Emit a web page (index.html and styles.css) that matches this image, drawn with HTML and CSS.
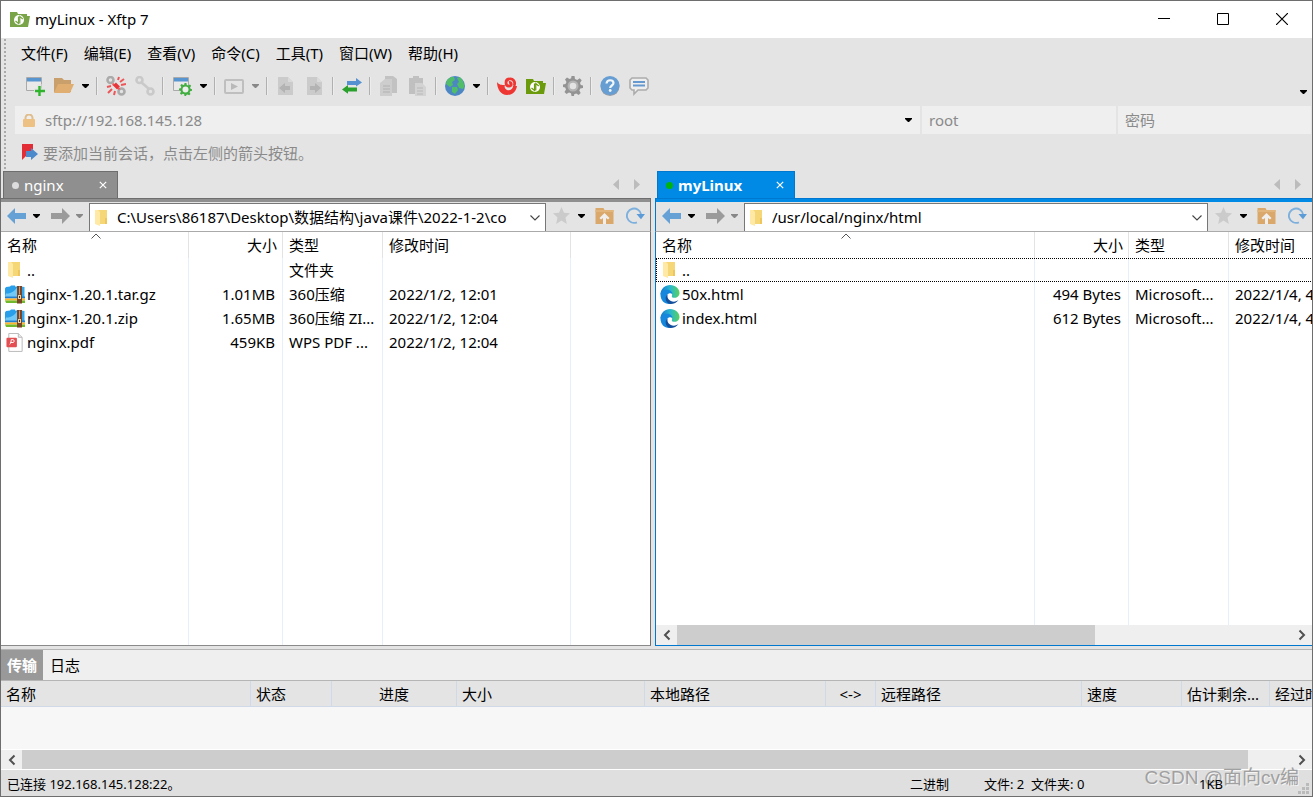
FILE: index.html
```
<!DOCTYPE html>
<html lang="zh-CN">
<head>
<meta charset="utf-8">
<title>myLinux - Xftp 7</title>
<link rel="stylesheet" href="styles.css">
</head>
<body>
<svg class="defs" aria-hidden="true">
  <symbol id="caret" viewBox="0 0 7 4"><path d="M0 0h7v1L4 4H3L0 1z" fill="currentColor"/></symbol>
  <symbol id="chev-down" viewBox="0 0 10 6"><path d="M.5.5 5 5 9.500.5" fill="none" stroke="#444" stroke-width="1.100"/></symbol>
  <symbol id="left" viewBox="0 0 20 16"><path d="M0 8 8 0v5h11v6H8v5z" fill="currentColor"/></symbol>
  <symbol id="right" viewBox="0 0 20 16"><path d="M20 8 12 0v5H1v6h11v5z" fill="currentColor"/></symbol>
  <symbol id="x" viewBox="0 0 8 8"><path d="m.8.8 6.400 6.400M7.200.8.8 7.200" stroke="#fff" stroke-width="1.200"/></symbol>
  <symbol id="scroll-left" viewBox="0 0 8 12"><path d="M6.500 1.500 2 6l4.500 4.500" fill="none" stroke="#505050" stroke-width="2"/></symbol>
  <symbol id="scroll-right" viewBox="0 0 8 12"><path d="M1.500 1.500 6 6l-4.500 4.500" fill="none" stroke="#505050" stroke-width="2"/></symbol>
  <symbol id="folder" viewBox="0 0 14 18"><path d="M3 1h10v14H3z" fill="#f6d778"/><path d="M1 1h3l2 2v14l-5-2z" fill="#ffe9a5"/><path d="M11 9h2v6h-2z" fill="#eec65c"/></symbol>
  <symbol id="star" viewBox="0 0 18 17"><path d="m9 0 2.500 5.700 6 .6-4.500 4.100L14.300 17 9 13.600 3.700 17 5 10.400.5 6.300l6-.6z" fill="#cbcbcb"/></symbol>
  <symbol id="up" viewBox="0 0 18 17"><path d="M0 1h8l1 2h9v14H0z" fill="#d9a86a"/><path d="M0 3h18v2H0z" fill="#e1b57b"/><path d="m4 11 5-5 5 5-1.500 1.500L10.500 11v6h-3v-6l-2 1.500z" fill="#f1eeee"/></symbol>
  <symbol id="refresh" viewBox="0 0 20 18"><path d="M11.500 16.200A7.600 7.600 0 1 1 16 8" fill="none" stroke="#7db0dd" stroke-width="2"/><path d="M11 7.500h9L15.800 13z" fill="#5a9bd8"/></symbol>
  <symbol id="archive" viewBox="0 0 20 18"><path d="M1 1.500 5 1l1-1h4v1h3v10H0V3z" fill="#289fe8"/><path d="m16 1 3.500.5V12H16z" fill="#36a9ee"/><path d="M1 8c5 0 8-2 11-6v9H0z" fill="#70c9f7"/><path d="M0 11h20v2H0z" fill="#1f7fd2"/><path d="M0 13h20v2H0z" fill="#ffb52d"/><path d="M0 15h20v2.500H1z" fill="#70b92c"/><path d="M12 .5h5V18h-5z" fill="#7a4529"/><path d="M14 1h1v8h-1z" fill="#c49b72"/><path d="M13 9.500h3v4h-3z" fill="#ead3a4"/><path d="M14 10.500h1v2h-1z" fill="#5a2f18"/></symbol>
  <symbol id="pdf" viewBox="0 0 18 20"><path d="M2.500.5h10l4 4v14.900h-14z" fill="#fff" stroke="#b7b7b7"/><path d="M12.500.5v4h4" fill="#e9e9e9" stroke="#b7b7b7"/><rect y="5" width="11" height="10" rx="1" fill="#e34f52"/><path d="M3.500 12c1-1 1.500-3 1.500-5h2c1.500 0 1.500 3 0 3H4" fill="none" stroke="#fff"/></symbol>
  <symbol id="edge" viewBox="0 0 20 20"><linearGradient id="eg" x1="0" x2="1"><stop stop-color="#1678cf"/><stop offset=".5" stop-color="#27b7d0"/><stop offset="1" stop-color="#5bd15b"/></linearGradient><path d="M0 10C0 4 5 0 10 0c6 0 10 4 10 8.500 0 3-2.400 5-5 5-2 0-3.600-.8-3-2C13 9 11 7 8 7c-4 0-7 2-8 3z" fill="url(#eg)"/><path d="M0 10c0-3 3-5 7-5 3 0 5.500 2 5.500 4.500C11 8 8 8.500 7 10.500c-2 4 2 8.500 7 7.500-1.300 1.200-3 2-5 2-5 0-9-4-9-10z" fill="#1587dc"/><path d="M7.500 10c-1 4 2 7.500 6.500 7.500 2 0 4-1 5-2-1.500 3-5 4.500-8.500 4.500C5 19.500 4 12 7.500 10z" fill="#124f9c"/></symbol>
  <symbol id="gear" viewBox="0 0 20 20"><path d="M8.500 0h3l.5 3 2.200 1 2.500-1.700 2 2L17 7l.8 2 2.200.5v2.500l-2.700.5-1 2 1.400 2.500-2 2-2.500-1.500-2 .8L11 20H8.500L8 17.300l-2-.9L3.500 18l-2-2L3 13.500l-.8-2L0 11V8.500L2.500 8l1-2L2 3.500l2-2L6.500 3l1.700-.7z" fill="currentColor"/></symbol>
  <symbol id="xdir" viewBox="0 0 20 16"><path d="M0 1h7l1 2h9v2h3l-2 11H0z" fill="currentColor"/><circle cx="9" cy="9" r="5" fill="#fff"/><path d="M8.500 5.500v7L5.500 10M9.800 12.500v-7l3 2.500" fill="none" stroke="currentColor" stroke-width="1.200"/></symbol>
</svg>

<main class="window">
  <header class="titlebar">
    <svg class="app-icon" viewBox="0 0 20 16"><use href="#xdir"/></svg>
    <h1>myLinux - Xftp 7</h1>
    <button class="win-btn" aria-label="最小化"><svg width="12" height="12"><path d="M0 5.500h12" stroke="#000"/></svg></button>
    <button class="win-btn" aria-label="最大化"><svg width="12" height="12"><path d="M.5.5h11v11H.5z" fill="none" stroke="#000"/></svg></button>
    <button class="win-btn" aria-label="关闭"><svg width="12" height="12"><path d="m0 0 12 12M12 0 0 12" stroke="#000" stroke-width="1.200"/></svg></button>
  </header>

  <section class="bars">
    <nav class="menu">
      <button>文件(F)</button><button>编辑(E)</button><button>查看(V)</button><button>命令(C)</button><button>工具(T)</button><button>窗口(W)</button><button>帮助(H)</button>
    </nav>

    <div class="toolbar" role="toolbar">
      <button class="tool" aria-label="新建"><svg viewBox="0 0 20 20"><path d="M1.500 1.500h15v13h-15z" fill="#e9e9e9" stroke="#aaa"/><path d="M2 2h14v3.500H2z" fill="#5795d0"/><path d="M14.500 8v12M9 14.500h11" stroke="#e4e4e4" stroke-width="4"/><path d="M14.500 10v10M10 15h10" stroke="#2eb52c" stroke-width="2.400"/></svg></button>
      <button class="tool" aria-label="打开"><svg viewBox="0 0 20 20"><path d="M0 2h8l2 2h7v12H0z" fill="#c9a06c"/><path d="M4 8h16l-4 9H0z" fill="#e0ae70"/></svg></button>
      <button class="drop" aria-label="打开选项"><svg><use href="#caret"/></svg></button>
      <i class="sep"></i>
      <button class="tool" aria-label="断开"><svg viewBox="0 0 20 20"><g fill="none" stroke="#ababab" stroke-width="2.600"><circle cx="4.500" cy="4" r="3"/><circle cx="15.500" cy="15.500" r="3"/></g><path d="m6.500 8 2 1m4 3 1 1.500M12 4l1-3m1 5 4-3m-3 6 5-1M1 11l4-1m-3 7 4-4m2 6 1-4" stroke="#ee5558" stroke-width="2"/><path d="m8.500 8 4 4" stroke="#e93539" stroke-width="4"/></svg></button>
      <button class="tool" aria-label="重新连接"><svg viewBox="0 0 20 20"><g fill="none" stroke="#c9c9c9" stroke-width="2.600"><circle cx="4.500" cy="4" r="3"/><circle cx="15.500" cy="15.500" r="3"/><path d="m6 6 8 7"/></g></svg></button>
      <i class="sep"></i>
      <button class="tool" aria-label="属性"><svg viewBox="0 0 20 20"><path d="M1.500 1.500h15v13h-15z" fill="#e9e9e9" stroke="#aaa"/><path d="M2 2h14v3.500H2z" fill="#5795d0"/><g transform="translate(7 7) scale(.65)" color="#43ae41"><use href="#gear" width="20" height="20"/></g><circle cx="13.500" cy="13.500" r="3" fill="#eee"/></svg></button>
      <button class="drop" aria-label="属性选项"><svg><use href="#caret"/></svg></button>
      <i class="sep"></i>
      <button class="tool" aria-label="执行"><svg viewBox="0 0 20 20"><rect x="1" y="4" width="18" height="13" rx="1" fill="none" stroke="#bfbfbf" stroke-width="2"/><path d="m7 7 7 3.500L7 14z" fill="#b9b9b9"/></svg></button>
      <button class="drop dim" aria-label="执行选项"><svg><use href="#caret"/></svg></button>
      <i class="sep"></i>
      <button class="tool" aria-label="传输到左侧"><svg viewBox="0 0 20 20"><path d="M2 1h10l5 5v13H2z" fill="#cbcbcb"/><path d="M12 1v5h5" fill="#dadada"/><path d="m3 12 6-5v3h5v4H9v3z" fill="#b3b3b3"/></svg></button>
      <button class="tool" aria-label="传输到右侧"><svg viewBox="0 0 20 20"><path d="M2 1h10l5 5v13H2z" fill="#cbcbcb"/><path d="M12 1v5h5" fill="#dadada"/><path d="m16 12-6-5v3H5v4h5v3z" fill="#b3b3b3"/></svg></button>
      <i class="sep"></i>
      <button class="tool" aria-label="同步"><svg viewBox="0 0 20 20"><path d="M5 5h9V2l6 4.500-6 4V9H5z" fill="#5590d1"/><path d="M15 11.500H6V9l-6 4.500 6 4.200V15.500h9z" fill="#29a12c"/></svg></button>
      <i class="sep"></i>
      <button class="tool" aria-label="复制"><svg viewBox="0 0 20 20"><path d="M6 0h8l4 3v14H6z" fill="#c2c2c2"/><path d="M6 3 1 7v13h12V3z" fill="#cdcdcd"/><path d="M4 10h7M4 13h7M4 16h7" stroke="#b1b1b1"/></svg></button>
      <button class="tool" aria-label="粘贴"><svg viewBox="0 0 20 20"><path d="M1 2h4V0h6v2h4v16H1z" fill="#c0c0c0"/><path d="M7 7h7l4 4v9H7z" fill="#d3d3d3"/><path d="M9 12h6M9 15h6M9 18h6" stroke="#b8b8b8"/></svg></button>
      <i class="sep"></i>
      <button class="tool" aria-label="浏览器"><svg viewBox="0 0 20 20"><circle cx="10" cy="10" r="10" fill="#4c87c4"/><path d="M2 4l4-3 3 0 1 3-3 2 1 3-3 2-4-3zm10-2 3-1 3 4 1.500 5-1.500 3-4-1-2-4 2-2zM7 11l5 0 1 3-3 4-3-2z" fill="#50bd68"/></svg></button>
      <button class="drop" aria-label="浏览器选项"><svg><use href="#caret"/></svg></button>
      <i class="sep"></i>
      <button class="tool" aria-label="Xshell"><svg viewBox="0 0 20 20"><path d="M0 6c2 3 5 3 8 3-1 2 0 4 2 5 3 1 6-1 6-4h4c-1 6-5 9-10 9C4 19 0 13 0 6z" fill="#ee3632"/><path d="M17 10c2-4-1-8-5-7-4 .5-4 7 0 7 3 0 3-4 0-3.500" fill="none" stroke="#ee3632" stroke-width="2.800"/></svg></button>
      <button class="tool olive" aria-label="Xftp"><svg viewBox="0 -2 20 20"><use href="#xdir" width="20" height="16"/></svg></button>
      <i class="sep"></i>
      <button class="tool gray" aria-label="选项"><svg viewBox="0 0 20 20"><use href="#gear"/><circle cx="10" cy="10" r="5.500" fill="#b5b5b5"/><circle cx="10" cy="10" r="3.300" fill="#e4e4e4"/></svg></button>
      <i class="sep"></i>
      <button class="tool" aria-label="帮助"><svg viewBox="0 0 20 20"><circle cx="10" cy="10.500" r="9.500" fill="#929da9"/><circle cx="10" cy="9.500" r="9.500" fill="#669ed3"/><path d="M6.500 7.500C7 3 13.500 3.500 13.500 7c0 2.500-3.300 2.500-3.300 5" fill="none" stroke="#f2f7fa" stroke-width="2.200"/><circle cx="10.200" cy="14.500" r="1.400" fill="#f2f7fa"/></svg></button>
      <button class="tool" aria-label="反馈"><svg viewBox="0 0 20 20"><path d="M3 2h14l2 2v8l-2 2H9l-4 4v-4H3l-2-2V4z" fill="#eee" stroke="#acacac" stroke-width="1.600"/><path d="M4 6h12M4 9.500h12" stroke="#6699d0" stroke-width="1.800"/></svg></button>
      <button class="overflow" aria-label="更多按钮"><svg><use href="#caret"/></svg></button>
    </div>

    <form class="address">
      <div class="field host">
        <svg class="lock" viewBox="0 0 12 13"><path d="M2.500 6V4a3.500 3.500 0 0 1 7 0v2" fill="none" stroke="#dfbd8c" stroke-width="2"/><rect y="5" width="12" height="8" rx="1" fill="#ecc183"/></svg>
        <input aria-label="主机" value="sftp://192.168.145.128">
        <button type="button" class="drop" aria-label="主机列表"><svg><use href="#caret"/></svg></button>
      </div>
      <div class="field user"><input aria-label="用户名" placeholder="root"></div>
      <div class="field pass"><input type="password" aria-label="密码" placeholder="密码"></div>
    </form>

    <p class="hint"><svg viewBox="0 0 17 17"><path d="M1 0h11v5L1 16z" fill="#e22d36"/><path d="M5 7h5V4l7 6-7 6v-3H5z" fill="#4d8acc"/></svg>要添加当前会话，点击左侧的箭头按钮。</p>
  </section>

  <div class="panes">
    <section class="pane local">
      <div class="tabs">
        <div class="tab"><button class="tab-name"><i class="dot"></i>nginx</button><button class="tab-close" aria-label="关闭 nginx"><svg><use href="#x"/></svg></button></div>
        <div class="tab-nav"><svg viewBox="0 0 29 11"><path d="M7 0v11L1 5.500zM22 0v11l6-5.500z" fill="#bcbcbc"/></svg></div>
      </div>
      <div class="pathbar">
        <button class="nav back" aria-label="后退"><svg><use href="#left"/></svg></button><button class="drop" aria-label="后退历史"><svg><use href="#caret"/></svg></button>
        <button class="nav fwd" aria-label="前进"><svg><use href="#right"/></svg></button><button class="drop dim" aria-label="前进历史"><svg><use href="#caret"/></svg></button>
        <div class="path"><svg class="fold"><use href="#folder"/></svg><input aria-label="本地路径" value="C:\Users\86187\Desktop\数据结构\java课件\2022-1-2\co"><button class="chev" aria-label="路径列表"><svg><use href="#chev-down"/></svg></button></div>
        <button class="act" aria-label="收藏"><svg><use href="#star"/></svg></button><button class="drop tight" aria-label="收藏列表"><svg><use href="#caret"/></svg></button>
        <button class="act" aria-label="上级目录"><svg><use href="#up"/></svg></button><button class="act" aria-label="刷新"><svg><use href="#refresh"/></svg></button>
      </div>
      <div class="list">
        <svg class="sort" viewBox="0 0 10 6"><path d="M.5 5.500 5 1l4.500 4.500" fill="none" stroke="#555"/></svg>
        <table class="files">
          <colgroup><col class="c-name"><col class="c-size"><col class="c-type"><col class="c-date"><col></colgroup>
          <thead><tr><th>名称</th><th class="num">大小</th><th>类型</th><th>修改时间</th><th></th></tr></thead>
          <tbody>
            <tr><td><span class="file"><svg class="fold"><use href="#folder"/></svg>..</span></td><td></td><td>文件夹</td><td></td><td></td></tr>
            <tr><td><span class="file"><svg><use href="#archive"/></svg>nginx-1.20.1.tar.gz</span></td><td class="num">1.01MB</td><td>360压缩</td><td>2022/1/2, 12:01</td><td></td></tr>
            <tr><td><span class="file"><svg><use href="#archive"/></svg>nginx-1.20.1.zip</span></td><td class="num">1.65MB</td><td>360压缩 ZI...</td><td>2022/1/2, 12:04</td><td></td></tr>
            <tr><td><span class="file"><svg><use href="#pdf"/></svg>nginx.pdf</span></td><td class="num">459KB</td><td>WPS PDF ...</td><td>2022/1/2, 12:04</td><td></td></tr>
            <tr class="fill"><td></td><td></td><td></td><td></td><td></td></tr>
          </tbody>
        </table>
      </div>
    </section>

    <section class="pane remote">
      <div class="tabs">
        <div class="tab"><button class="tab-name"><i class="dot"></i>myLinux</button><button class="tab-close" aria-label="关闭 myLinux"><svg><use href="#x"/></svg></button></div>
        <div class="tab-nav"><svg viewBox="0 0 29 11"><path d="M7 0v11L1 5.500zM22 0v11l6-5.500z" fill="#bcbcbc"/></svg></div>
      </div>
      <div class="pathbar">
        <button class="nav back" aria-label="后退"><svg><use href="#left"/></svg></button><button class="drop" aria-label="后退历史"><svg><use href="#caret"/></svg></button>
        <button class="nav fwd" aria-label="前进"><svg><use href="#right"/></svg></button><button class="drop dim" aria-label="前进历史"><svg><use href="#caret"/></svg></button>
        <div class="path"><svg class="fold"><use href="#folder"/></svg><input aria-label="远程路径" value="/usr/local/nginx/html"><button class="chev" aria-label="路径列表"><svg><use href="#chev-down"/></svg></button></div>
        <button class="act" aria-label="收藏"><svg><use href="#star"/></svg></button><button class="drop tight" aria-label="收藏列表"><svg><use href="#caret"/></svg></button>
        <button class="act" aria-label="上级目录"><svg><use href="#up"/></svg></button><button class="act" aria-label="刷新"><svg><use href="#refresh"/></svg></button>
      </div>
      <div class="list">
        <svg class="sort" viewBox="0 0 10 6"><path d="M.5 5.500 5 1l4.500 4.500" fill="none" stroke="#555"/></svg>
        <table class="files">
          <colgroup><col class="c-name"><col class="c-size"><col class="c-type"><col class="c-date"></colgroup>
          <thead><tr><th>名称</th><th class="num">大小</th><th>类型</th><th>修改时间</th></tr></thead>
          <tbody>
            <tr class="focus"><td><span class="file"><svg class="fold"><use href="#folder"/></svg>..</span></td><td></td><td></td><td></td></tr>
            <tr><td><span class="file"><svg><use href="#edge"/></svg>50x.html</span></td><td class="num">494 Bytes</td><td>Microsoft...</td><td>2022/1/4, 4</td></tr>
            <tr><td><span class="file"><svg><use href="#edge"/></svg>index.html</span></td><td class="num">612 Bytes</td><td>Microsoft...</td><td>2022/1/4, 4</td></tr>
            <tr class="fill"><td></td><td></td><td></td><td></td></tr>
          </tbody>
        </table>
      </div>
      <div class="scroll"><button aria-label="向左滚动"><svg><use href="#scroll-left"/></svg></button><div class="track"><div class="thumb"></div></div><button aria-label="向右滚动"><svg><use href="#scroll-right"/></svg></button></div>
    </section>
  </div>

  <section class="transfer">
    <div class="transfer-tabs"><button class="on">传输</button><button>日志</button></div>
    <div class="queue">
      <table>
        <colgroup><col class="q-name"><col class="q-state"><col class="q-prog"><col class="q-size"><col class="q-local"><col class="q-dir"><col class="q-remote"><col class="q-speed"><col class="q-left"><col class="q-time"></colgroup>
        <thead><tr><th>名称</th><th>状态</th><th class="mid">进度</th><th>大小</th><th>本地路径</th><th class="mid">&lt;-&gt;</th><th>远程路径</th><th>速度</th><th>估计剩余...</th><th>经过时间</th></tr></thead>
      </table>
    </div>
    <div class="scroll"><button aria-label="向左滚动"><svg><use href="#scroll-left"/></svg></button><div class="track"><div class="thumb"></div></div><button aria-label="向右滚动"><svg><use href="#scroll-right"/></svg></button></div>
  </section>

  <footer class="status">
    <span class="conn">已连接 192.168.145.128:22。</span>
    <span class="mode">二进制</span>
    <span class="count">文件: 2&nbsp; 文件夹: 0</span>
    <span class="bytes">1KB</span>
    <svg class="grip" viewBox="0 0 11 11"><path d="M8 0h3v3H8zM4 4h3v3H4zm4 0h3v3H8zM0 8h3v3H0zm4 0h3v3H4zm4 0h3v3H8z" fill="#bababa"/></svg>
    <span class="watermark">CSDN @面向cv编</span>
  </footer>
</main>
</body>
</html>
```
FILE: styles.css
```
* { box-sizing: border-box; }
html, body { height: 100%; margin: 0; }
body {
  font: 15px/24px "Noto Sans", "Noto Sans CJK SC", sans-serif;
  color: #000;
  overflow: hidden;
}
button, input {
  font: inherit;
  color: inherit;
  border: 0;
  padding: 0;
  margin: 0;
  background: none;
  min-width: 0;
}
button { white-space: nowrap; display: flex; align-items: center; justify-content: center; flex: none; }
svg { display: block; flex: none; }
.defs { position: absolute; width: 0; height: 0; }

.window {
  height: 100%;
  display: flex;
  flex-direction: column;
  background: #e4e4e4;
  border: 1px solid #6e6e6e;
}

/* Title bar */
.titlebar { display: flex; align-items: center; height: 37px; background: #fff; padding: 0 1px 2px 9px; flex: none; }
.titlebar h1 { font-size: 15px; font-weight: 400; margin: 0; flex: 1; }
.app-icon { width: 20px; height: 16px; margin-right: 5px; color: #79a548; }
.win-btn { width: 59px; height: 35px; }

/* Menu, toolbar, address */
.bars { position: relative; flex: none; padding-left: 14px; }
.bars::before {
  content: "";
  position: absolute;
  left: 3px;
  top: 1px;
  bottom: 2px;
  border-left: 2px dotted #aaa;
}
.menu { display: flex; gap: 16px; height: 30px; align-items: center; padding-left: 6px; }
.toolbar { display: flex; height: 38px; align-items: center; padding: 0 0 2px 5px; }
.tool { width: 29px; height: 26px; }
.tool svg { width: 20px; height: 20px; }
.drop { width: 15px; height: 26px; }
.drop svg, .overflow svg { width: 7px; height: 4px; }
.dim { color: #888; }
.olive { color: #6b9a0c; }
.gray { color: #939393; }
.sep { width: 2px; height: 18px; margin: 0 3px; background: linear-gradient(90deg, #b0b0b0 50%, #ededed 50%); }
.overflow { margin-left: auto; width: 17px; height: 24px; align-self: flex-end; }
.address { display: flex; gap: 2px; padding-right: 1px; }
.field { height: 28px; background: #efefef; color: #8a8a8a; display: flex; align-items: center; padding: 0 7px; }
.field input { flex: 1; width: 0; }
.field input::placeholder { color: #8a8a8a; opacity: 1; }
.field .drop { color: #000; width: 10px; }
.host { flex: 1; padding-left: 8px; }
.lock { width: 12px; height: 13px; margin-right: 10px; }
.user { width: 194px; }
.pass { width: 193px; }
.hint { display: flex; align-items: center; height: 37px; margin: 0; padding-left: 6px; color: #8a8a8a; }
.hint svg { width: 17px; height: 17px; margin-right: 5px; }

/* Panes */
.panes { flex: 1; min-height: 0; display: flex; gap: 4px; }
.pane { display: flex; flex-direction: column; min-width: 0; }
.local { flex: 650; --edge: #6e6e6e; --accent: #8f8f8f; }
.remote { flex: 657; --edge: #0078d0; --accent: #008ae5; }
.tabs { display: flex; height: 27px; padding-left: 2px; flex: none; }
.tab {
  display: flex;
  align-items: center;
  background: var(--accent);
  border: 1px solid var(--edge);
  border-bottom: 0;
  color: #fff;
}
.local .tab { width: 115px; }
.remote .tab { width: 138px; font-weight: 700; }
.tab-name { flex: 1; justify-content: flex-start; padding-left: 8px; }
.dot { width: 7px; height: 7px; border-radius: 50%; background: #ddd; margin-right: 5px; }
.remote .dot { background: #00b40c; }
.tab-close { width: 28px; height: 26px; }
.tab-close svg { width: 8px; height: 8px; }
.tab-nav { margin-left: auto; align-self: center; padding-right: 10px; }
.tab-nav svg { width: 29px; height: 11px; }
.pathbar {
  display: flex;
  align-items: center;
  height: 34px;
  padding: 0 0 0 4px;
  border-top: 1px solid var(--edge);
  box-shadow: inset 0 3px var(--accent);
  border-bottom: 1px solid #aaa;
  flex: none;
}
.local .pathbar, .local .list { border-right: 1px solid var(--edge); }
.remote .pathbar, .remote .list, .remote .scroll { border-left: 1px solid var(--edge); }
.nav { width: 24px; height: 24px; margin-top: 1px; }
.nav svg { width: 20px; height: 16px; }
.back { color: #66a1d6; }
.fwd { color: #9b9b9b; margin-left: 4px; }
.pathbar .drop { margin-top: 1px; }
.path {
  flex: 1;
  min-width: 0;
  align-self: stretch;
  display: flex;
  align-items: center;
  margin-top: 4px;
  margin-left: 2px;
  background: #fff;
  border: 1px solid #777;
  border-bottom: 0;
  padding-left: 4px;
}
.path input { flex: 1; width: 0; padding: 0 0 2px 9px; }
.fold { width: 14px; height: 18px; }
.chev { width: 20px; height: 26px; margin-left: 4px; }
.chev svg { width: 10px; height: 6px; }
.act { width: 31px; height: 24px; margin-top: 1px; }
.act svg { width: 19px; height: 17px; }
.pathbar .tight { width: 8px; margin-right: 4px; }
.act:last-child { width: 30px; }

/* File lists */
.list { position: relative; flex: 1; min-height: 0; overflow: hidden; background: #fff; border-bottom: 1px solid #8a8a8a; }
.remote .list { border-bottom: 0; }
.sort { position: absolute; top: 1px; width: 10px; height: 6px; }
.local .sort { left: 90px; }
.remote .sort { left: 185px; }
table { border-collapse: separate; border-spacing: 0; table-layout: fixed; }
.files { width: 100%; height: 100%; }
.remote .files { width: 761px; }
.c-size { width: 94px; }
.c-type { width: 100px; }
.c-date { width: 188px; }
.local .c-name { width: 188px; }
th, td { padding: 0 6px; text-align: left; font-weight: 400; white-space: nowrap; overflow: hidden; text-overflow: ellipsis; }
.files th { height: 26px; border-right: 1px solid #e3e3e3; }
.files td { height: 24px; border-right: 1px solid #e6f0fc; }
.files th:last-child, .files td:last-child { border-right: 0; }
.files .fill td { height: auto; }
.files td:first-child { padding: 0 0 0 4px; }
.files .num { text-align: right; padding-right: 7px; }
.files th.num { padding-right: 5px; }
.file { display: flex; align-items: center; gap: 2px; }
.file svg { width: 20px; height: 19px; }
.file .fold { width: 18px; height: 18px; margin-right: 2px; }
.focus { outline: 1px dotted #000; outline-offset: -1px; }

/* Scroll bars */
.scroll { display: flex; height: 20px; background: #efefef; border-bottom: 1px solid #fff; flex: none; }
.scroll button { width: 21px; }
.scroll button svg { width: 8px; height: 12px; }
.track { flex: 1; display: flex; }
.thumb { background: #cdcdcd; }
.remote .thumb { width: 68%; }
.remote .scroll { height: 21px; border-bottom: 1px solid var(--edge); }
.transfer .thumb { width: 96.6%; }

/* Transfer queue */
.transfer { margin-top: 3px; border-top: 1px solid #b5b5b5; flex: none; }
.transfer-tabs { display: flex; height: 31px; background: #efefef; border-bottom: 1px solid #b5b5b5; }
.transfer-tabs button { width: 42px; }
.transfer-tabs .on { background: #999; color: #fff; font-weight: 700; }
.transfer-tabs .on + button { width: 44px; }
.queue { height: 69px; overflow: hidden; background: #f7f7f7; border-bottom: 1px solid #fff; }
.queue table { width: 1351px; }
.queue th { height: 26px; padding: 0 5px; background: #e4e4e4; border-right: 1px solid #d0d9e8; border-bottom: 1px solid #d0d9e8; }
.queue .mid { text-align: center; }
.q-name { width: 250px; }
.q-state { width: 81px; }
.q-prog { width: 125px; }
.q-size { width: 188px; }
.q-local { width: 181px; }
.q-dir { width: 50px; }
.q-remote { width: 206px; }
.q-speed { width: 100px; }
.q-left { width: 88px; }
.q-time { width: 82px; }

/* Status bar */
.status { position: relative; display: flex; align-items: center; height: 26px; background: #dfdfdf; padding: 1px 3px 0 6px; font-size: 13px; flex: none; }
.conn { flex: 1; }
.mode { width: 74px; }
.count { width: 215px; }
.bytes { width: 99px; position: relative; z-index: 1; }
.grip { width: 11px; height: 11px; align-self: flex-end; margin-bottom: 2px; }
.watermark {
  position: absolute;
  right: 13px;
  bottom: 6px;
  font: 19px/24px "Liberation Sans", "Noto Sans CJK SC", sans-serif;
  color: #a0a0a0;
  text-shadow: 1px 1px #f4f4f4;
}
```
